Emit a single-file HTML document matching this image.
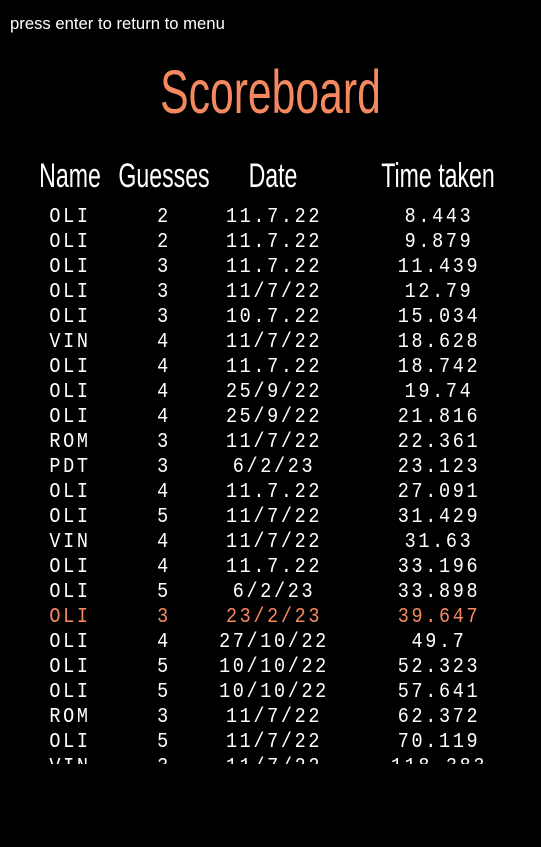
<!DOCTYPE html>
<html><head><style>
body{margin:0;width:541px;height:847px;background:#000;overflow:hidden;position:relative;color:#fff;font-family:"Liberation Sans",sans-serif}
.n{position:absolute;white-space:nowrap;transform-origin:center center}
#tip{left:10px;top:14px;font-size:17px;transform:scaleX(0.98);transform-origin:left center}
#title{left:0;width:541px;text-align:center;top:57px;font-size:61px;color:#f4895f;transform:scaleX(0.7)}
.h{top:157px;font-size:34px;transform:translateX(-50%) scaleX(0.68)}
#rows{position:absolute;left:0;top:205px;width:541px;height:559px;overflow:hidden}
.r{position:relative;height:25px;font-family:"Liberation Mono",monospace;font-size:21px;line-height:25px}
.r span{position:absolute;transform:translateX(-50%) scaleX(0.88);letter-spacing:3px}
.o{color:#f4895f}
</style></head><body>
<div class="n" id="tip">press enter to return to menu</div>
<div class="n" id="title">Scoreboard</div>
<div class="n h" style="left:70px">Name</div>
<div class="n h" style="left:164px">Guesses</div>
<div class="n h" style="left:273px">Date</div>
<div class="n h" style="left:438px">Time taken</div>
<div id="rows">
<div class="r"><span style="left:70px">OLI</span><span style="left:164px">2</span><span style="left:274px">11.7.22</span><span style="left:439px">8.443</span></div>
<div class="r"><span style="left:70px">OLI</span><span style="left:164px">2</span><span style="left:274px">11.7.22</span><span style="left:439px">9.879</span></div>
<div class="r"><span style="left:70px">OLI</span><span style="left:164px">3</span><span style="left:274px">11.7.22</span><span style="left:439px">11.439</span></div>
<div class="r"><span style="left:70px">OLI</span><span style="left:164px">3</span><span style="left:274px">11/7/22</span><span style="left:439px">12.79</span></div>
<div class="r"><span style="left:70px">OLI</span><span style="left:164px">3</span><span style="left:274px">10.7.22</span><span style="left:439px">15.034</span></div>
<div class="r"><span style="left:70px">VIN</span><span style="left:164px">4</span><span style="left:274px">11/7/22</span><span style="left:439px">18.628</span></div>
<div class="r"><span style="left:70px">OLI</span><span style="left:164px">4</span><span style="left:274px">11.7.22</span><span style="left:439px">18.742</span></div>
<div class="r"><span style="left:70px">OLI</span><span style="left:164px">4</span><span style="left:274px">25/9/22</span><span style="left:439px">19.74</span></div>
<div class="r"><span style="left:70px">OLI</span><span style="left:164px">4</span><span style="left:274px">25/9/22</span><span style="left:439px">21.816</span></div>
<div class="r"><span style="left:70px">ROM</span><span style="left:164px">3</span><span style="left:274px">11/7/22</span><span style="left:439px">22.361</span></div>
<div class="r"><span style="left:70px">PDT</span><span style="left:164px">3</span><span style="left:274px">6/2/23</span><span style="left:439px">23.123</span></div>
<div class="r"><span style="left:70px">OLI</span><span style="left:164px">4</span><span style="left:274px">11.7.22</span><span style="left:439px">27.091</span></div>
<div class="r"><span style="left:70px">OLI</span><span style="left:164px">5</span><span style="left:274px">11/7/22</span><span style="left:439px">31.429</span></div>
<div class="r"><span style="left:70px">VIN</span><span style="left:164px">4</span><span style="left:274px">11/7/22</span><span style="left:439px">31.63</span></div>
<div class="r"><span style="left:70px">OLI</span><span style="left:164px">4</span><span style="left:274px">11.7.22</span><span style="left:439px">33.196</span></div>
<div class="r"><span style="left:70px">OLI</span><span style="left:164px">5</span><span style="left:274px">6/2/23</span><span style="left:439px">33.898</span></div>
<div class="r o"><span style="left:70px">OLI</span><span style="left:164px">3</span><span style="left:274px">23/2/23</span><span style="left:439px">39.647</span></div>
<div class="r"><span style="left:70px">OLI</span><span style="left:164px">4</span><span style="left:274px">27/10/22</span><span style="left:439px">49.7</span></div>
<div class="r"><span style="left:70px">OLI</span><span style="left:164px">5</span><span style="left:274px">10/10/22</span><span style="left:439px">52.323</span></div>
<div class="r"><span style="left:70px">OLI</span><span style="left:164px">5</span><span style="left:274px">10/10/22</span><span style="left:439px">57.641</span></div>
<div class="r"><span style="left:70px">ROM</span><span style="left:164px">3</span><span style="left:274px">11/7/22</span><span style="left:439px">62.372</span></div>
<div class="r"><span style="left:70px">OLI</span><span style="left:164px">5</span><span style="left:274px">11/7/22</span><span style="left:439px">70.119</span></div>
<div class="r"><span style="left:70px">VIN</span><span style="left:164px">3</span><span style="left:274px">11/7/22</span><span style="left:439px">118.383</span></div>
</div>
</body></html>
